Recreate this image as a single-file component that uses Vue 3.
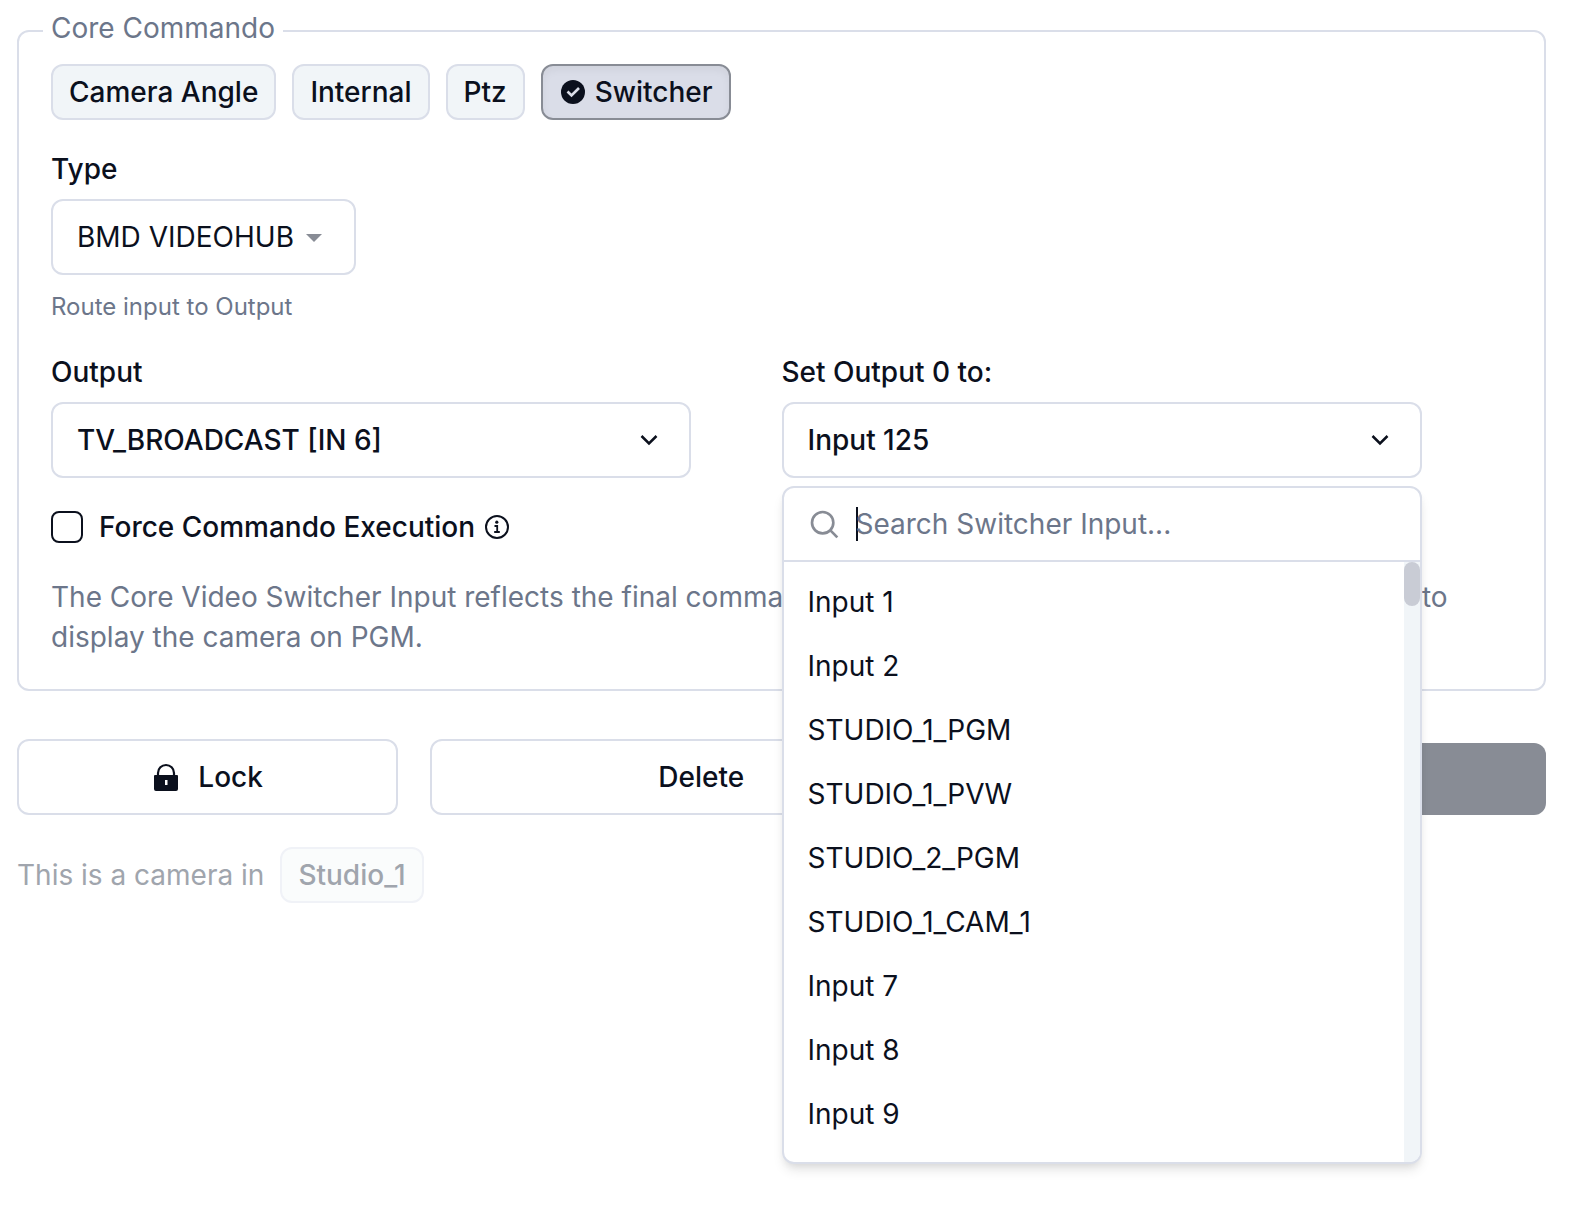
<script setup>
import { ref } from 'vue'

const commandTypes = ['Camera Angle', 'Internal', 'Ptz', 'Switcher']
const activeType = ref('Switcher')
const force = ref(false)
const query = ref('')
const inputs = [
  'Input 1',
  'Input 2',
  'STUDIO_1_PGM',
  'STUDIO_1_PVW',
  'STUDIO_2_PGM',
  'STUDIO_1_CAM_1',
  'Input 7',
  'Input 8',
  'Input 9',
]
</script>

<template>
  <main class="page">
    <form @submit.prevent>
      <fieldset class="panel">
        <legend>Core Commando</legend>

        <div class="chips">
          <button
            v-for="type in commandTypes"
            :key="type"
            type="button"
            class="chip"
            :class="{ active: type === activeType }"
            :aria-pressed="type === activeType"
            @click="activeType = type"
          >
            <svg v-if="type === activeType" class="icon" viewBox="0 0 28 28" aria-hidden="true">
              <circle cx="14" cy="14" r="12" fill="currentColor" />
              <path d="M8.500 13.500l4 4L20 10" fill="none" stroke="#dadde8" stroke-width="2.600" />
            </svg>
            {{ type }}
          </button>
        </div>

        <div class="section">
          <label class="label" for="hub-type">Type</label>
          <div class="select-wrap">
            <select id="hub-type" class="control">
              <option>BMD VIDEOHUB</option>
            </select>
            <svg class="caret" viewBox="0 0 16 8" aria-hidden="true">
              <path d="M0 0h16L8 8z" fill="#888c95" />
            </svg>
          </div>
          <p class="hint">Route input to Output</p>
        </div>

        <div class="section columns">
          <div class="column">
            <label class="label" for="output">Output</label>
            <button id="output" type="button" class="control combo">
              TV_BROADCAST [IN 6]
              <svg class="chevron" viewBox="0 0 32 32" aria-hidden="true">
                <path d="M8.500 12L16 19.500L23.500 12" />
              </svg>
            </button>
          </div>
          <div class="column">
            <label class="label" for="input">Set Output 0 to:</label>
            <button id="input" type="button" class="control combo" aria-expanded="true">
              Input 125
              <svg class="chevron" viewBox="0 0 32 32" aria-hidden="true">
                <path d="M8.500 12L16 19.500L23.500 12" />
              </svg>
            </button>

            <div class="popover">
              <div class="search">
                <svg class="search-icon" viewBox="0 0 24 24" aria-hidden="true">
                  <circle cx="11" cy="11" r="8" />
                  <path d="M22 22l-5.200-5.200" />
                </svg>
                <span class="cursor"></span>
                <input v-model="query" type="text" placeholder="Search Switcher Input..." aria-label="Search Switcher Input" />
              </div>
              <div class="results">
                <ul role="listbox" aria-label="Switcher inputs">
                  <li v-for="name in inputs" :key="name" role="option">{{ name }}</li>
                </ul>
                <div class="track"><div class="thumb"></div></div>
              </div>
            </div>
          </div>
        </div>

        <div class="force">
          <input id="force" v-model="force" type="checkbox" />
          <label for="force">Force Commando Execution</label>
          <svg class="icon" viewBox="0 0 28 28" aria-hidden="true">
            <circle cx="14" cy="14" r="11" fill="none" stroke="currentColor" stroke-width="2" />
            <circle cx="13.800" cy="9.200" r="1.600" fill="currentColor" />
            <path d="M11.500 13h2.700v6M11.200 19h5.600" fill="none" stroke="currentColor" stroke-width="1.800" />
          </svg>
        </div>

        <p class="note">
          The Core Video Switcher Input reflects the final commands that the Video Switcher will receive in order to
          display the camera on PGM.
        </p>
      </fieldset>

      <div class="actions">
        <button type="button" class="control action">
          <svg class="icon" viewBox="0 0 28 28" aria-hidden="true">
            <path d="M6 13V10a8 8 0 0 1 16 0v3" fill="none" stroke="currentColor" stroke-width="2.200" />
            <path
              fill-rule="evenodd"
              d="M3 12h22a1 1 0 0 1 1 1v13a2 2 0 0 1-2 2H4a2 2 0 0 1-2-2V13a1 1 0 0 1 1-1zM13 17v5h2.500v-5z"
              fill="currentColor"
            />
          </svg>
          Lock
        </button>
        <button type="button" class="control action">Delete</button>
        <button type="submit" class="save">Save</button>
      </div>
    </form>

    <p class="location">This is a camera in <span class="chip">Studio_1</span></p>
  </main>
</template>

<style>
body {
  margin: 0;
  background: #fff;
}
</style>

<style scoped>
.page {
  box-sizing: border-box;
  min-height: 100vh;
  padding: 14px 28px 32px 17px;
  color: #0b101d;
  font: 400 28px/40px Inter, sans-serif;
}

.page * {
  box-sizing: border-box;
}

button,
input,
select {
  margin: 0;
  color: inherit;
  font: inherit;
}

p,
ul {
  margin: 0;
  padding: 0;
}

.panel {
  min-width: 0;
  margin: 0;
  padding: 16px 32px 32px;
  border: 2px solid #dadee9;
  border-radius: 12px;
}

legend {
  margin-left: -8px;
  padding: 0 8px 6px;
  color: #6c768a;
  line-height: 28px;
}

.chips {
  display: flex;
  flex-wrap: wrap;
  gap: 16px;
}

.chip {
  display: inline-flex;
  align-items: center;
  gap: 8px;
  height: 56px;
  padding: 0 16px;
  border: 2px solid #dadee9;
  border-radius: 12px;
  background: #f1f5f8;
  font-weight: 500;
}

.chip.active {
  border-color: #888c95;
  background: #dadde8;
  box-shadow: inset 0 4px 8px rgb(0 0 0 / 5%);
}

.icon {
  flex: none;
  width: 28px;
  height: 28px;
}

.section {
  margin-top: 35px;
}

.label {
  display: block;
  margin-bottom: 16px;
  font-weight: 500;
  line-height: 28px;
}

.control {
  height: 76px;
  padding: 0 24px;
  border: 2px solid #dadee9;
  border-radius: 12px;
  background: #fff;
}

.select-wrap {
  position: relative;
  width: 305px;
}

select.control {
  display: block;
  width: 100%;
  appearance: none;
}

.caret {
  position: absolute;
  top: 35px;
  right: 34px;
  width: 16px;
  height: 8px;
  pointer-events: none;
}

.hint {
  margin-top: 16px;
  color: #6c768a;
  font-size: 24px;
  line-height: 32px;
}

.columns {
  display: grid;
  grid-template-columns: 1fr 1fr;
}

.column {
  position: relative;
}

.combo {
  display: flex;
  align-items: center;
  justify-content: space-between;
  width: 100%;
  max-width: 640px;
  font-weight: 500;
}

.chevron {
  width: 32px;
  height: 32px;
  fill: none;
  stroke: currentColor;
  stroke-width: 2.5;
}

.popover {
  position: absolute;
  z-index: 1;
  top: 100%;
  left: 0;
  width: 100%;
  max-width: 640px;
  margin-top: 8px;
  overflow: hidden;
  border: 2px solid #dadee9;
  border-radius: 12px;
  background: #fff;
  box-shadow: 0 8px 12px -2px rgb(0 0 0 / 10%), 0 4px 8px -4px rgb(0 0 0 / 10%);
}

.search {
  display: flex;
  align-items: center;
  height: 74px;
  padding: 0 24px;
  border-bottom: 2px solid #dadee9;
}

.search-icon {
  flex: none;
  width: 32px;
  height: 32px;
  margin-right: 16px;
  fill: none;
  stroke: #888c95;
  stroke-width: 2;
}

.cursor {
  width: 2px;
  height: 34px;
  margin-right: -2px;
  background: #0b101d;
}

.search input {
  flex: 1;
  min-width: 0;
  height: 40px;
  padding: 0;
  border: 0;
  outline: 0;
  background: none;
}

.search input::placeholder {
  color: #6c768a;
  opacity: 1;
}

.results {
  display: flex;
  height: 600px;
}

.results ul {
  flex: 1;
  padding: 8px;
  list-style: none;
}

.results li {
  padding: 12px 16px;
}

.track {
  width: 16px;
  background: #f1f5f8;
}

.thumb {
  height: 44px;
  border-radius: 8px;
  background: #c9ccd5;
}

.force {
  display: flex;
  align-items: center;
  height: 34px;
  margin-top: 32px;
  font-weight: 500;
}

.force input {
  width: 32px;
  height: 32px;
  margin-right: 16px;
  border: 2px solid #0b101d;
  border-radius: 8px;
  appearance: none;
}

.force .icon {
  margin-left: 8px;
}

.note {
  margin-top: 33px;
  color: #6c768a;
}

.actions {
  display: grid;
  grid-template-columns: 19fr 27fr 27fr;
  gap: 32px;
  align-items: end;
  margin-top: 48px;
}

.action {
  display: flex;
  align-items: center;
  justify-content: center;
  gap: 18px;
  font-weight: 500;
}

.save {
  height: 72px;
  border: 0;
  border-radius: 12px;
  background: #888c95;
  color: #fff;
  font-weight: 500;
}

.location {
  display: flex;
  align-items: center;
  gap: 16px;
  margin-top: 32px;
  color: #a0a5ad;
}

.location .chip {
  border-color: #f0f2f7;
  background: #fafcfc;
}
</style>
